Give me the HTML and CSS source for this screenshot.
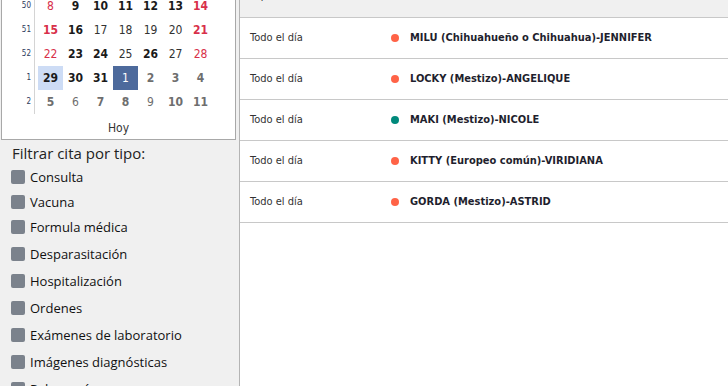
FILE: index.html
```html
<!DOCTYPE html>
<html lang="es">
<head>
    <meta charset="UTF-8">
    <meta name="viewport" content="width=device-width, initial-scale=1.0">
    <title>Agenda</title>
    <link rel="stylesheet" href="styles.css">
</head>
<body>
    <div class="sidebar">
        <!-- Mini calendario -->
        <div class="calendar">
            <div class="cal-body">
                <div class="weeks">
                    <div>50</div>
                    <div>51</div>
                    <div>52</div>
                    <div>1</div>
                    <div>2</div>
                </div>
                <div class="days">
                    <span class="red">8</span>
                    <span class="b">9</span>
                    <span class="b">10</span>
                    <span class="b">11</span>
                    <span class="b">12</span>
                    <span class="b">13</span>
                    <span class="red b">14</span>

                    <span class="red b">15</span>
                    <span class="b">16</span>
                    <span>17</span>
                    <span>18</span>
                    <span>19</span>
                    <span>20</span>
                    <span class="red b">21</span>

                    <span class="red">22</span>
                    <span class="b">23</span>
                    <span class="b">24</span>
                    <span>25</span>
                    <span class="b">26</span>
                    <span>27</span>
                    <span class="red">28</span>

                    <span class="b today">29</span>
                    <span class="b">30</span>
                    <span class="b">31</span>
                    <span class="selected">1</span>
                    <span class="other b">2</span>
                    <span class="other b">3</span>
                    <span class="other b">4</span>

                    <span class="other b">5</span>
                    <span class="other">6</span>
                    <span class="other b">7</span>
                    <span class="other b">8</span>
                    <span class="other">9</span>
                    <span class="other b">10</span>
                    <span class="other b">11</span>
                </div>
            </div>
            <div class="cal-footer">Hoy</div>
        </div>

        <!-- Filtros -->
        <div class="filters">
            <h3>Filtrar cita por tipo:</h3>
            <label class="filter"><span class="box"></span>Consulta</label>
            <label class="filter"><span class="box"></span>Vacuna</label>
            <label class="filter"><span class="box"></span>Formula médica</label>
            <label class="filter"><span class="box"></span>Desparasitación</label>
            <label class="filter"><span class="box"></span>Hospitalización</label>
            <label class="filter"><span class="box"></span>Ordenes</label>
            <label class="filter"><span class="box"></span>Exámenes de laboratorio</label>
            <label class="filter"><span class="box"></span>Imágenes diagnósticas</label>
            <label class="filter"><span class="box"></span>Peluquería</label>
        </div>
    </div>

    <div class="agenda">
        <div class="row head">29/12</div>
        <div class="row">
            <div class="time">Todo el día</div>
            <span class="dot"></span>
            <div class="name">MILU (Chihuahueño o Chihuahua)-JENNIFER</div>
        </div>
        <div class="row">
            <div class="time">Todo el día</div>
            <span class="dot"></span>
            <div class="name">LOCKY (Mestizo)-ANGELIQUE</div>
        </div>
        <div class="row">
            <div class="time">Todo el día</div>
            <span class="dot teal"></span>
            <div class="name">MAKI (Mestizo)-NICOLE</div>
        </div>
        <div class="row">
            <div class="time">Todo el día</div>
            <span class="dot"></span>
            <div class="name">KITTY (Europeo común)-VIRIDIANA</div>
        </div>
        <div class="row">
            <div class="time">Todo el día</div>
            <span class="dot"></span>
            <div class="name">GORDA (Mestizo)-ASTRID</div>
        </div>
    </div>
</body>
</html>
```

FILE: styles.css
```css
body {
    margin: 0;
    height: 386px;
    overflow: hidden;
    display: flex;
    background-color: #fff;
    font-family: "DejaVu Sans Condensed", "DejaVu Sans", sans-serif;
    font-stretch: condensed;
    color: #222;
}

.sidebar {
    flex: none;
    width: 239px;
    background-color: #f0f0f0;
}

/* calendario */
.calendar {
    width: 235px;
    margin-left: 1px;
    box-sizing: border-box;
    background-color: #fff;
    border: 1px solid #a8a8a8;
    border-top: none;
    overflow: hidden;
}

.cal-body {
    display: flex;
    margin-top: -6px;
}

.weeks {
    width: 33px;
    box-sizing: border-box;
    border-right: 1px solid #d4d4d4;
}

.weeks div {
    height: 24px;
    line-height: 24px;
    text-align: right;
    padding-right: 3px;
    font-size: 8px;
    color: #2e3a5c;
}

.days {
    margin-left: 3px;
    display: grid;
    grid-template-columns: repeat(7, 25px);
    grid-auto-rows: 24px;
}

.days span {
    text-align: center;
    line-height: 24px;
    font-size: 12px;
    color: #333;
}

.days .b {
    font-weight: bold;
    color: #1a1a1a;
}

.days .red {
    color: #d8304a;
}

.days .other {
    color: #6e6e6e;
}

.days .today {
    background-color: #cddcf5;
}

.days .selected {
    background-color: #4d6a9c;
    color: #fff;
}

.cal-footer {
    height: 25px;
    line-height: 28px;
    text-align: center;
    font-size: 12px;
    color: #333;
}

/* filtros */
.filters {
    font-family: "Open Sans", "Noto Sans", sans-serif;
    font-stretch: normal;
    padding-top: 3px;
}

.filters h3 {
    margin: 0 0 4px 12px;
    font-size: 15px;
    line-height: 20px;
    font-weight: normal;
    color: #222;
}

.filter {
    display: flex;
    align-items: center;
    height: 20px;
    margin-bottom: 7px;
    padding-left: 11px;
    font-size: 13px;
    color: #111;
}

.filter:nth-of-type(1),
.filter:nth-of-type(2) {
    margin-bottom: 5px;
}

.box {
    width: 14px;
    height: 14px;
    margin-right: 5px;
    border-radius: 2px;
    background-color: #7b828c;
}

/* agenda */
.agenda {
    flex: 1;
    border-left: 1px solid #b4b4b4;
    margin-top: -23px;
}

.row {
    height: 40px;
    display: flex;
    align-items: center;
    padding-left: 10px;
    padding-bottom: 1px;
    box-sizing: content-box;
    height: 39px;
    border-bottom: 1px solid #c8c8c8;
    font-size: 11px;
}

.row.head {
    background-color: #f0f0f0;
    padding-left: 9px;
}

.time {
    width: 141px;
    color: #333;
}

.dot {
    width: 8px;
    height: 8px;
    border-radius: 50%;
    background-color: #ff6347;
    margin-right: 11px;
}

.dot.teal {
    background-color: #00897b;
}

.name {
    font-weight: bold;
    color: #1f1f2e;
}
```
